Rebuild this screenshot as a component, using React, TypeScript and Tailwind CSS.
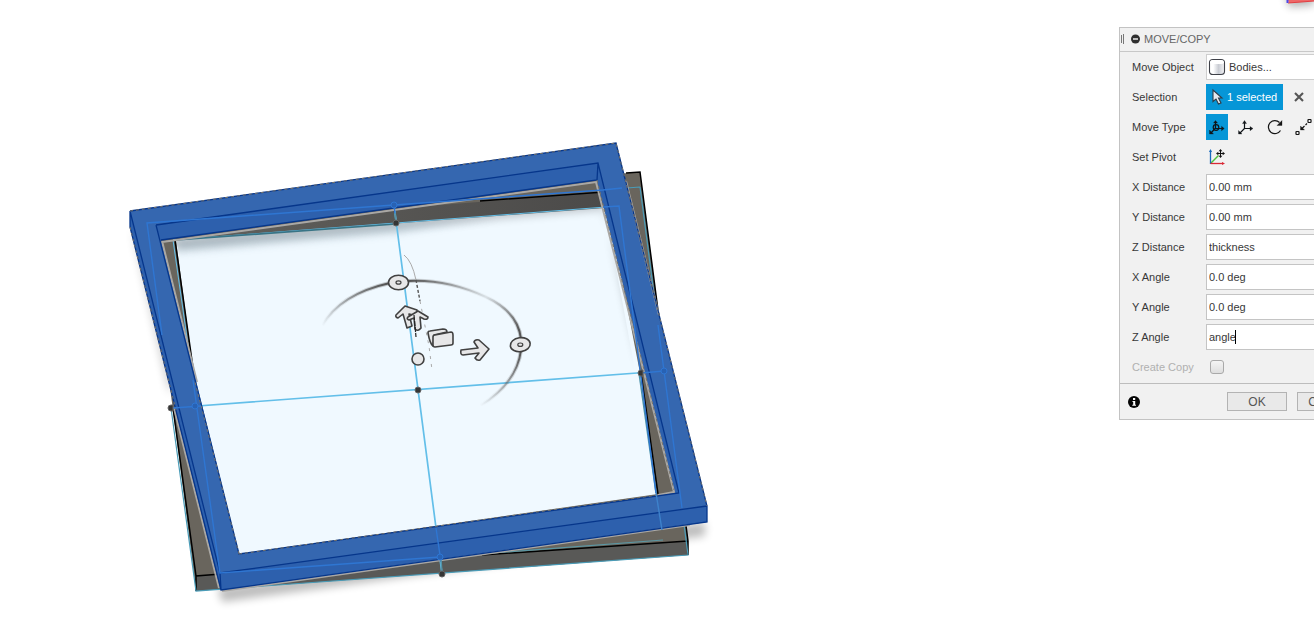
import { useState } from "react";
import type { ReactNode } from "react";

function ModelView() {
  return (
    <svg viewBox="0 0 1119 617" preserveAspectRatio="xMinYMin meet" className="block w-full" role="img" aria-label="Frame model">
      <defs>
        <filter id="soft" x="-20%" y="-20%" width="140%" height="140%">
          <feGaussianBlur stdDeviation="4" />
        </filter>
        <clipPath id="floor">
          <path d="M176 240L605 208L658 494L239 554Z" />
        </clipPath>
        <linearGradient id="arcLeft" gradientUnits="userSpaceOnUse" x1="322" y1="326" x2="385" y2="284">
          <stop offset="0" stopColor="#555" stopOpacity="0" />
          <stop offset="1" stopColor="#555" />
        </linearGradient>
        <linearGradient id="arcTop" gradientUnits="userSpaceOnUse" x1="410" y1="281" x2="486" y2="297">
          <stop offset="0" stopColor="#555" />
          <stop offset="1" stopColor="#777" stopOpacity="0.15" />
        </linearGradient>
        <linearGradient id="arcRight" gradientUnits="userSpaceOnUse" x1="486" y1="297" x2="520" y2="330">
          <stop offset="0" stopColor="#777" stopOpacity="0.15" />
          <stop offset="1" stopColor="#555" />
        </linearGradient>
        <linearGradient id="arcDown" gradientUnits="userSpaceOnUse" x1="520" y1="352" x2="480" y2="406">
          <stop offset="0" stopColor="#555" />
          <stop offset="1" stopColor="#777" stopOpacity="0" />
        </linearGradient>
        <linearGradient id="backWall" x1="0" x2="1">
          <stop offset="0" stopColor="#62615d" />
          <stop offset="1" stopColor="#4b4a49" />
        </linearGradient>
      </defs>

      {/* cast shadows */}
      <g filter="url(#soft)" fill="#000" opacity="0.26">
        <path d="M218 588L705 522L705 536L222 602Z" />
        <path d="M132 228L139 245L172 380L170 395Z" />
      </g>

      {/* lower frame */}
      <path d="M160 212L640 172L688 541L688 555L196 591L150 230Z" fill="#69655d" />
      <path d="M196 576L688 541V555L196 591Z" fill="#595957" />
      <path d="M173 226L604 192L605 208L176 240Z" fill="url(#backWall)" />
      <path d="M176 240L605 208L619 206L658 494L239 554L220 573Z" fill="#f0f9ff" />
      <g clipPath="url(#floor)">
        <path d="M160 240L600 190L640 372L632 300L602 210L176 247Z" fill="#000" opacity="0.2" filter="url(#soft)" />
        <path d="M176 240L500 216L400 232L176 252Z" fill="#69818f" opacity="0.35" filter="url(#soft)" />
      </g>
      <path d="M605 192L640 373L656 494L680 494L612 192Z" fill="#69655d" />
      <g fill="none" stroke="#000" strokeWidth="1.5">
        <path d="M626 173L640 172L688 541V555M482 555L688 541M221 574L196 576V591M173 408L196 576M175 240L195 382M641 373L658 494M480 201L604 192" />
      </g>

      {/* sketch lines */}
      <g fill="none" stroke="#63bfe9" strokeWidth="1.7">
        <path d="M394 205L442 574M171 408L664 371" />
        <path d="M173 240L619 206M173 240L193 380" strokeWidth="1" />
        <path d="M440 557L663 540" stroke="#5b97a4" strokeWidth="1.2" />
        <path d="M640 187L688 555L196 591L171 408M600 190L640 187" stroke="#4a9cb8" strokeWidth="1.2" />
        <path d="M639 373L656 493" stroke="#4a91aa" strokeWidth="1.5" />
        <path d="M176 240L396 224" stroke="#397486" />
      </g>

      {/* upper frame */}
      <path fillRule="evenodd" fill="#3567b0" d="M130 211L616 143L707 506V522L221 590L130 227ZM161 240L239 554L675 493L597 180Z" />
      <path fill="#2d60ad" d="M156 225L598 163L597 180L161 240ZM220 573L707 506V522L221 590ZM598 163L679 493L675 493L597 180ZM130 211L220 573L221 590L130 227Z" />
      <g fill="none" stroke="#aaa8a5" strokeWidth="2">
        <path d="M162 242L596 182L674 492L658 495M162 241L197 382M174 408L219 588M222 591L690 525M626 181L659 315" />
      </g>
      <g fill="none" stroke="#06368b" strokeWidth="1.3">
        <path d="M130 211L616 143L707 506V522L221 590L130 227V211L220 573L221 590M220 573L707 506M156 225L598 163L679 493L239 554L156 225M598 163L597 180L161 240" />
      </g>
      <g fill="none" stroke="#77746c" strokeWidth="1" strokeDasharray="3 3">
        <path d="M130 211L616 143L707 506M239 554L658 495M239 554L195 382M597 180L674 490M130 227L176 410" />
      </g>
      <g fill="none" stroke="#2f76d2" strokeWidth="1.4">
        <path d="M220 573L193 380L178 290M162 335L147 223L394 205L600 190M193 380L220 573L440 557M619 206L663 535M605 207L619 206M171 408L201 406M641 373L664 371L682 508M640 187L664 371M394 205L395 214M436 528L441 562" stroke="none" />
        <path d="M162 335L147 223L394 205M394 205L603 190M193 380L220 573L440 557M603 207L619 206L656 493M173 408L201 406M641 373L664 371L682 508M658 325L664 371M394 205L395 214M436 528L441 562M603 190L622 188" />
        <path d="M656 493L662 530" stroke="#3d82cc" />
        <g fill="#2862b4" strokeWidth="1">
          <circle cx="394" cy="205" r="3" />
          <circle cx="195" cy="406" r="3" />
          <circle cx="440" cy="557" r="3" />
          <circle cx="664" cy="371" r="3" />
        </g>
      </g>
      <path d="M395 213L396 223M441 560L442 573" stroke="#5393a8" strokeWidth="1.5" />
      <g fill="#353535" stroke="#656565">
        <circle cx="396" cy="223" r="3" />
        <circle cx="418" cy="390" r="3" />
        <circle cx="442" cy="574" r="3" />
        <path d="M171 405A3 3 0 0 0 171 411L173 411V405ZM641 370A3 3 0 0 0 641 376L643 376V370Z" />
      </g>

      {/* manipulator */}
      <g fill="none" strokeWidth="4" opacity="0.3">
        <path d="M322 326Q340 294 390 283" stroke="url(#arcLeft)" />
        <path d="M408 281Q447 279 486 297" stroke="url(#arcTop)" />
        <path d="M486 297Q518 312 521 339" stroke="url(#arcRight)" />
        <path d="M521 350Q517 383 480 406" stroke="url(#arcDown)" />
      </g>
      <g fill="none" strokeWidth="2">
        <path d="M322 326Q340 294 390 283" stroke="url(#arcLeft)" />
        <path d="M408 281Q447 279 486 297" stroke="url(#arcTop)" />
        <path d="M486 297Q518 312 521 339" stroke="url(#arcRight)" />
        <path d="M521 350Q517 383 480 406" stroke="url(#arcDown)" />
        <path d="M404 255Q412 261 416 280" stroke="#aaa" strokeWidth="1" />
        <path d="M416 280L420 301" stroke="#555" strokeWidth="1.4" strokeDasharray="3 2" />
        <path d="M420 301L429 346L432 370" stroke="#aaa" strokeWidth="1" strokeDasharray="3 5" />
      </g>
      <g fill="#e7e7e8" stroke="#414141" strokeWidth="1.6" strokeLinejoin="round">
        <ellipse cx="398.500" cy="282.500" rx="10" ry="7.300" />
        <ellipse cx="398.500" cy="282.500" rx="2.500" ry="1.700" strokeWidth="1.200" />
        <ellipse cx="520.300" cy="344.700" rx="10" ry="7" transform="rotate(-8 520 345)" />
        <ellipse cx="520.300" cy="344.700" rx="2.500" ry="1.700" strokeWidth="1.200" />
        <circle cx="418" cy="359" r="6" />
        <path d="M405 306L417 310L417 316L409 314L412 326L407 328L403 314L398 318Q395 317 396 315Z" />
        <path d="M418 311L428 317Q428 320 424 319L420 317L421 328Q418 332 415 329L414 318L409 320Q406 319 408 317Z" />
        <path d="M414 315L416 337" fill="none" stroke="#222" strokeWidth="1.2" strokeDasharray="5 1" />
        <path d="M430 331L443 329Q447 329 447 332L434 335L433 346Q430 344 428 333Q428 331 430 331Z" />
        <path d="M435 335L451 332Q453 332 453 335V343Q453 345 451 345L435 347Q433 347 433 345V337Q433 335 435 335Z" />
        <path d="M461 350L478 348L474 342Q475 339 479 340L489 349L480 360Q477 361 475 358L479 353L463 355Q460 355 461 350Z" />
      </g>
    </svg>
  );
}

function ViewCubeCorner() {
  return (
    <svg viewBox="0 0 195 27" className="block h-[27px] w-full" aria-hidden="true">
      <defs><filter id="cubeBlur" x="-50%" y="-50%" width="200%" height="220%"><feGaussianBlur stdDeviation="4" /></filter></defs>
      <path d="M166 -8L195 -8V5L170 7Z" fill="#000" opacity="0.3" filter="url(#cubeBlur)" />
      <path d="M169 0H195V1L170 3Z" fill="#ee6868" />
      <path d="M169 3L195 1" stroke="#e33f42" strokeWidth="1" />
      <path d="M168.500 0V3" stroke="#4d46e8" strokeWidth="2" />
    </svg>
  );
}

const moveTypes: { name: string; icon: ReactNode }[] = [
  {
    name: "Free move",
    icon: (
      <g fill="none" stroke="#101418" strokeWidth="1.2">
        <circle cx="10" cy="13.500" r="2.800" />
        <path d="M9.500 8V14L5 19M9.500 14.500H17" />
        <path d="M7.500 9L9.500 6.500L11.500 9ZM15.500 12.300L18.300 14.500L15.500 16.700ZM3.500 16V20H7.500Z" fill="#101418" strokeWidth="0.300" />
      </g>
    ),
  },
  {
    name: "Translate",
    icon: (
      <g fill="none" stroke="#101418" strokeWidth="1.2">
        <path d="M9.500 8V14.500L5 19M9.500 14.500H17" />
        <path d="M7.500 9.500L9.500 6.500L11.500 9.500ZM15 12.500L18 14.500L15 16.700ZM3.500 16.500V20H7Z" fill="#101418" strokeWidth="0.300" />
      </g>
    ),
  },
  {
    name: "Rotate",
    icon: (
      <g fill="none" stroke="#151515" strokeWidth="1.2">
        <path d="M15.500 8.500A6.500 6.500 0 1 0 16.500 16.500" />
        <path d="M18 6.500V11.500H13Z" fill="#151515" strokeWidth="0.300" />
      </g>
    ),
  },
  {
    name: "Point to point",
    icon: (
      <g fill="none" stroke="#151515" strokeWidth="1.2">
        <rect x="15" y="5.500" width="3" height="3" rx="0.500" />
        <rect x="3" y="17.500" width="3" height="3" rx="0.500" />
        <path d="M14 9.500L12.500 11M11.500 12L8 15.500" />
        <path d="M7.500 12V16H11.500Z" fill="#151515" strokeWidth="0.300" />
      </g>
    ),
  },
];

const distances = [
  { id: "x-distance", label: "X Distance", value: "0.00 mm" },
  { id: "y-distance", label: "Y Distance", value: "0.00 mm" },
  { id: "z-distance", label: "Z Distance", value: "thickness" },
  { id: "x-angle", label: "X Angle", value: "0.0 deg" },
  { id: "y-angle", label: "Y Angle", value: "0.0 deg" },
  { id: "z-angle", label: "Z Angle", value: "angle" },
];

function Row({ label, id, muted, children }: { label: string; id: string; muted?: boolean; children: ReactNode }) {
  return (
    <div className="flex h-[30px] items-center pl-3">
      <label htmlFor={id} className={muted ? "w-[74px] shrink-0 text-[#b0b0b0]" : "w-[74px] shrink-0"}>{label}</label>
      {children}
    </div>
  );
}

function MovePanel() {
  const [active, setActive] = useState(0);
  return (
    <section className="w-[260px] border border-[#c3c3c3] bg-[#f1f1f1] text-[11px] leading-4 text-[#383838]">
      <header className="flex h-6 items-center border-b border-[#c8c8c8] pb-px text-[#666]">
        <svg viewBox="0 0 24 22" className="h-[22px] w-6" aria-hidden="true">
          <path d="M1.500 7V15M3.500 6V16" stroke="#777" />
          <circle cx="15.500" cy="11" r="4.500" fill="#303030" />
          <path d="M13 11H18" stroke="#eee" strokeWidth="1.500" />
        </svg>
        <h1>MOVE/COPY</h1>
      </header>

      <Row label="Move Object" id="move-object">
        <div className="relative flex-1">
          <select id="move-object" className="block h-[26px] w-full appearance-none border border-[#cecece] bg-white pl-[22px]">
            <option>Bodies...</option>
          </select>
          <svg viewBox="0 0 18 18" className="pointer-events-none absolute top-1 left-[2px] h-[18px] w-[18px]" aria-hidden="true">
            <defs>
              <linearGradient id="barrel"><stop offset="0" stopColor="#fff" /><stop offset="0.25" stopColor="#fff" /><stop offset="0.6" stopColor="#c9ccd3" /><stop offset="1" stopColor="#f4f4f6" /></linearGradient>
            </defs>
            <path d="M1.500 4.500Q1.500 1.500 5 1.500H13Q16.500 1.500 16.500 4.500V13.500Q16.500 16.500 13 16.500H5Q1.500 16.500 1.500 13.500Z" fill="url(#barrel)" stroke="#3e4047" strokeWidth="1.100" />
            <path d="M2 4.500Q2.500 6 5 6H13Q15.500 6 16 4.500V4Q15.500 2 13 2H5Q2.500 2 2 4Z" fill="#fff" />
          </svg>
        </div>
      </Row>

      <Row label="Selection" id="selection">
        <button id="selection" className="flex h-[26px] w-[77px] items-center bg-[#0696d7] text-white">
          <svg viewBox="0 0 21 26" className="h-[26px] w-[21px]" aria-hidden="true">
            <path d="M7 6V17.500L10 15L12.500 20L15 19L12.500 14H16Z" fill="#e4eaf0" stroke="#303b46" strokeWidth="1.100" />
          </svg>
          <span className="whitespace-nowrap">1 selected</span>
        </button>
        <button aria-label="Clear selection" className="ml-[11px] flex h-[10px] w-[10px]">
          <svg viewBox="0 0 10 10" className="h-[10px] w-[10px]"><path d="M1 1L9 9M9 1L1 9" stroke="#555" strokeWidth="2.100" /></svg>
        </button>
      </Row>

      <Row label="Move Type" id="move-type-0">
        <div className="flex gap-[7px]">
          {moveTypes.map((t, i) => (
            <button key={t.name} id={`move-type-${i}`} aria-label={t.name} onClick={() => setActive(i)} className={i === active ? "h-[26px] w-[22px] bg-[#0696d7]" : "h-[26px] w-[22px]"}>
              <svg viewBox="0 0 22 26" className="block h-[26px] w-[22px]">{t.icon}</svg>
            </button>
          ))}
        </div>
      </Row>

      <Row label="Set Pivot" id="set-pivot">
        <button id="set-pivot" aria-label="Set pivot" className="h-[26px] w-[22px]">
          <svg viewBox="0 0 22 26" className="block h-[26px] w-[22px]" fill="none">
            <path d="M5 19L12.500 11.500" stroke="#4cc23c" strokeWidth="1.400" />
            <path d="M4.500 20V6.500" stroke="#1769bd" strokeWidth="1.300" />
            <path d="M3 8L4.500 5L6 8Z" fill="#1769bd" />
            <path d="M4.500 19.500H17" stroke="#d92835" strokeWidth="1.300" />
            <path d="M16 18L19 19.500L16 21Z" fill="#d92835" />
            <path d="M14.500 6V13M11 9.500H18" stroke="#111" />
            <path d="M14.500 5L16.300 7.300H12.700ZM14.500 14L16.300 11.700H12.700ZM10 9.500L12.300 7.700V11.300ZM19 9.500L16.700 7.700V11.300Z" fill="#111" />
          </svg>
        </button>
      </Row>

      {distances.map((f) => (
        <Row key={f.id} label={f.label} id={f.id}>
          <div className="relative flex-1">
            <input id={f.id} type="text" defaultValue={f.value} className="block h-[26px] w-full border border-[#c4c4c4] bg-white pl-[2px] outline-none" />
            {f.id === "z-angle" && <span className="pointer-events-none absolute top-[6px] left-[29px] h-[14px] w-px bg-black" />}
          </div>
        </Row>
      ))}

      <Row label="Create Copy" id="create-copy" muted>
        <input id="create-copy" type="checkbox" disabled className="ml-1 h-[14px] w-[14px] appearance-none rounded-[3px] border border-[#a9a9a9] bg-linear-to-b from-[#f4f4f4] to-[#dedede]" />
      </Row>

      <footer className="mt-px flex h-9 items-center border-t border-[#bdbdbd] pl-2 text-xs text-[#555]">
        <button aria-label="Information" className="mr-[87px] h-3 w-3">
          <svg viewBox="0 0 12 12" className="block h-3 w-3">
            <circle cx="6" cy="6" r="6" fill="#050505" />
            <path d="M5 2H7.200V4H5ZM4.500 5H7.200V8.700H8V9.700H4.300V8.700H5.200V6H4.500Z" fill="#fff" />
          </svg>
        </button>
        <button className="mr-[10px] h-[19px] w-[60px] shrink-0 border border-[#b3b3b3] bg-[#e9e9e9]">OK</button>
        <button className="h-[19px] w-[60px] shrink-0 border border-[#b3b3b3] bg-[#e9e9e9]">Cancel</button>
      </footer>
    </section>
  );
}

export default function App() {
  return (
    <div className="flex min-h-screen overflow-hidden bg-white font-['Liberation_Sans',Arial,sans-serif]">
      <main className="min-w-0 flex-1">
        <ModelView />
      </main>
      <aside className="w-[195px] shrink-0 overflow-hidden">
        <ViewCubeCorner />
        <MovePanel />
      </aside>
    </div>
  );
}
